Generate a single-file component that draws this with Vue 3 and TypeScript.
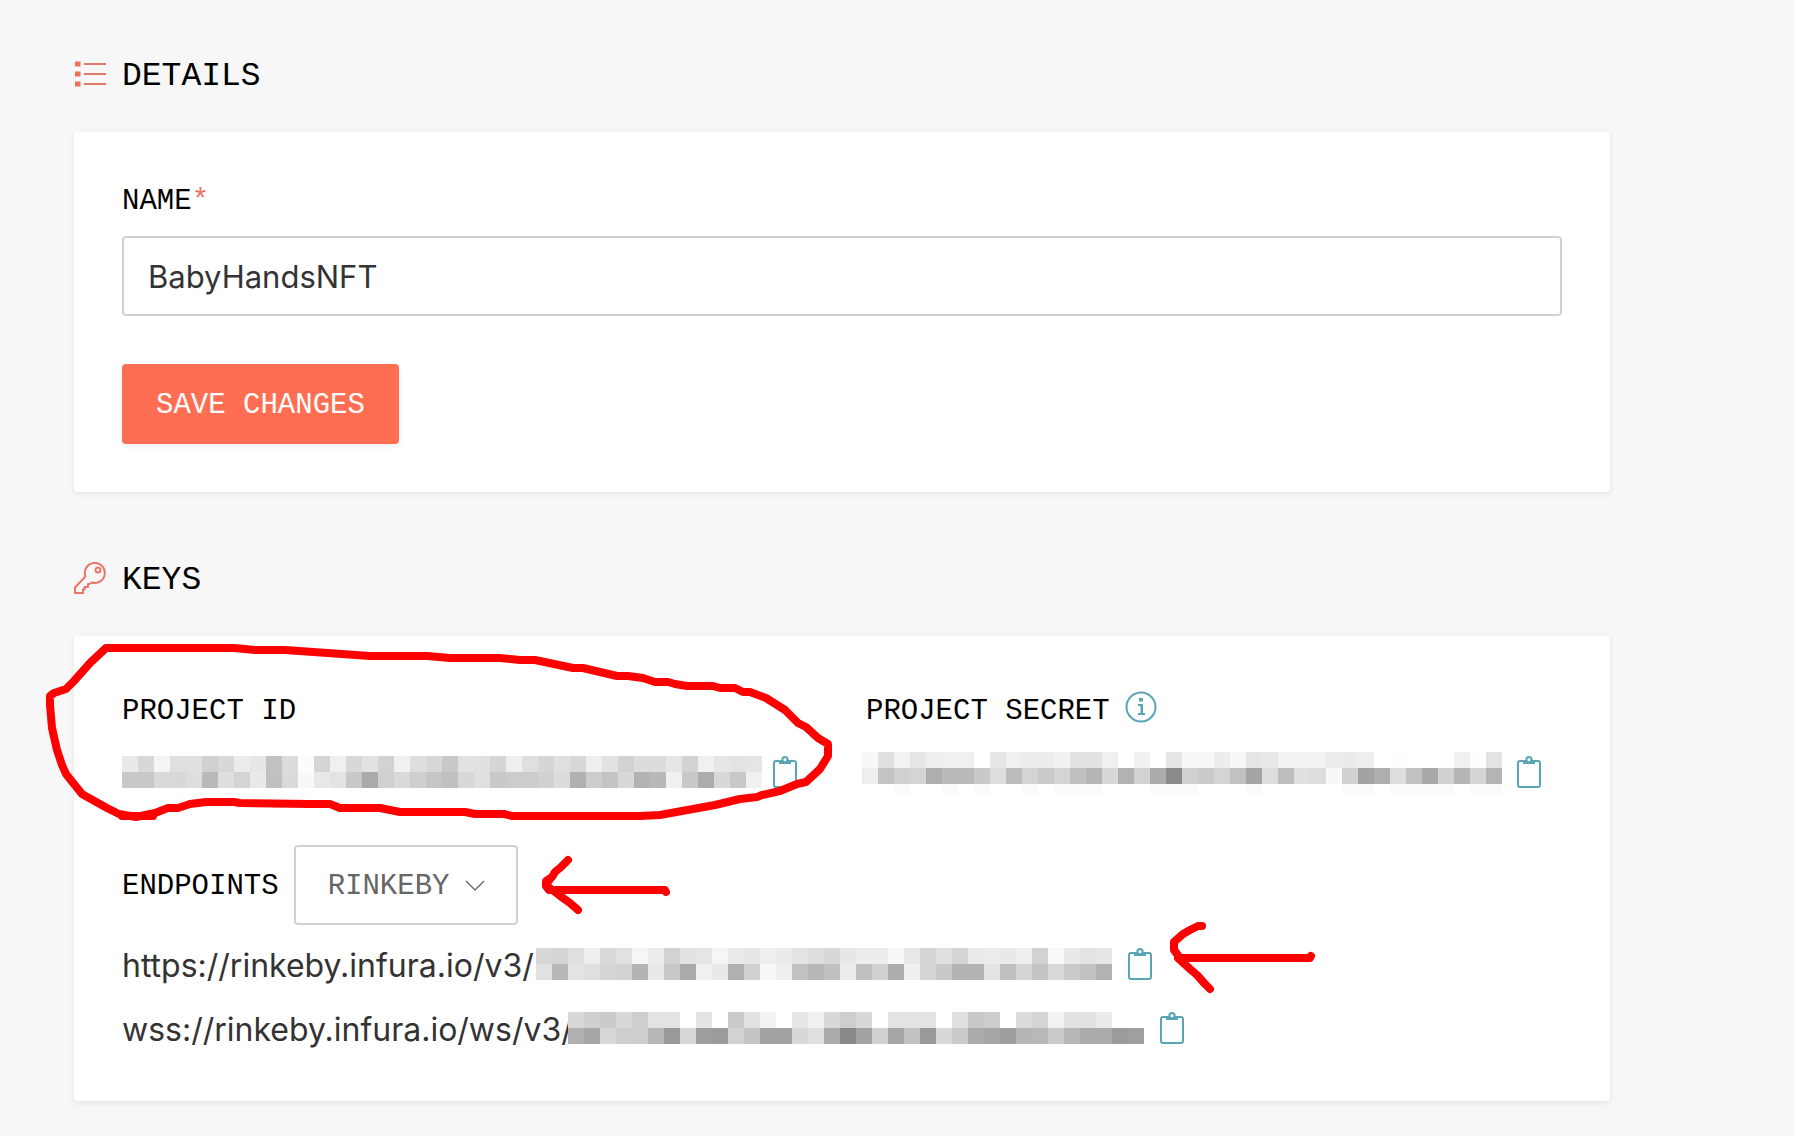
<script setup lang="ts">
import { ref, h } from 'vue'

const projectName = ref<string>('BabyHandsNFT')
const network = ref<string>('rinkeby')

// Redacted values: one two-digit hex grey per 16px cell, one string per row.
const projectId: string[] = [
  'e9d8f5e0e0d0d8ece6c2dcfcd5f0d8e2d2f1ded7c8e2e0d6eedfd6dfd8eee2d2dcdce6d3f0e6e3e5',
  'c8c8d9d8debaded4e9c0daf8e8e3c8aad0d9cfc6c0d8dfc9ccccd1dcb0ccc4d8b2b8f0c8acd8c8f0',
]
const projectSecret: string[] = [
  'f8e0f2e6eef0f0ffe6f0ededf1e2e2f0fff1ffe5f8f8edf8e6e9f3f3f3ecebeefffdfffffff0fee3',
  'eec3d1d4aebabac9debbd4cbd5c0b6d8b2d2ab8bd0cbd4c1a4ddbde0ddf8d1a3aeddc1a8d0b5d5b5',
  'fffffbfffffbfffbfffffbfffbfbfbfffffffbfbfbfffffffbfffffffffffbfbfffbfbfbfbfffbfb',
]
const httpsKey: string[] = [
  'd8d4dfeed9e1f6edd2e2e5f6eae6eeebe4ded8e7ededf8e8d5e0d5eaece9eed2f9e9e3e6',
  'e1b8e3dfd4d3b4e9c9aaf0e9b0d0f7eec1b8c0ecc0d1adefd5c8b4b4e4bfd5c4d9cbc2b2',
]
const wssKey: string[] = [
  'd8cfcbd8cee3e3ffe4ffcae2f2ffe6f0d8ced8ffe3e3e3ffe0c9cdffdcd5f2e2e2ebffff',
  'b0a6d8cfceb899d79e9bd2c5a2a2d8e0ab89a3d0a6c299d8cbaba69db6b9cbb8abab9b9f',
]

const Mosaic = (props: { rows: string[] }) => {
  const width = props.rows[0].length * 8
  const height = props.rows.length > 2 ? 44 : 32
  return h(
    'svg',
    {
      width,
      height,
      viewBox: `0 0 ${width} ${height}`,
      'shape-rendering': 'crispEdges',
      role: 'img',
      'aria-label': 'Hidden value',
    },
    props.rows.flatMap((row, y) =>
      (row.match(/../g) ?? []).map((g, x) =>
        h('rect', { x: x * 16, y: y * 16, width: 16, height: 16, fill: `#${g}${g}${g}` }),
      ),
    ),
  )
}
Mosaic.props = ['rows']

const CopyButton = () =>
  h('button', { type: 'button', 'aria-label': 'Copy to clipboard' }, [
    h('svg', { width: 24, height: 32, viewBox: '0 0 24 32', fill: 'none', stroke: '#5aa5b5', 'stroke-width': 2 }, [
      h('rect', { x: 1, y: 5, width: 22, height: 26, rx: 2 }),
      h('path', { d: 'M6 4h12v4H6z', fill: '#5aa5b5', stroke: 'none' }),
      h('circle', { cx: 12, cy: 3.6, r: 2.6, fill: '#fff' }),
    ]),
  ])
</script>

<template>
  <main class="page">
    <section class="section">
      <h2 class="heading">
        <svg width="32" height="32" viewBox="0 0 32 32" aria-hidden="true">
          <path d="M1 3.500h5.500v5h-5.500zM1 13.500h5.500v5h-5.500zM1 23.500h5.500v5h-5.500z" fill="#f0705a" />
          <path d="M10 6h22M10 16h22M10 26h22" stroke="#e27a6a" stroke-width="2" />
        </svg>
        <span class="heading-text">DETAILS</span>
      </h2>
      <form class="card" @submit.prevent>
        <label class="label name-label" for="project-name">NAME<span class="required">*</span></label>
        <input id="project-name" v-model="projectName" class="name-input" type="text" />
        <button class="save" type="submit">SAVE CHANGES</button>
      </form>
    </section>

    <section class="section">
      <h2 class="heading">
        <svg width="32" height="32" viewBox="0 0 32 32" fill="none" stroke="#ea7766" stroke-width="2" aria-hidden="true">
          <path d="M11.500 14.500A10 10 0 1 1 18 20.500L15.500 22H14V25H10.500V27.500H9V31H1V25.500Z" stroke-linejoin="round" />
          <circle cx="24" cy="8" r="2.500" />
        </svg>
        <span class="heading-text">KEYS</span>
      </h2>
      <div class="card keys">
        <div class="credentials">
          <div class="credential">
            <h3 class="label credential-label"><span class="label-text">PROJECT ID</span></h3>
            <div class="value id-value">
              <Mosaic :rows="projectId" />
              <CopyButton class="copy" />
            </div>
          </div>
          <div class="credential">
            <h3 class="label credential-label secret-label">
              <span class="label-text">PROJECT SECRET</span>
              <svg class="info" width="32" height="32" viewBox="0 0 32 32" role="img" aria-label="Information">
                <circle cx="16" cy="16" r="14.500" fill="none" stroke="#5aa5b5" stroke-width="2" />
                <path d="M14 7h4v3.500h-4zM13 13h5v9h2v2h-7v-2h2.500v-7H13z" fill="#5aa5b5" />
              </svg>
            </h3>
            <div class="value">
              <Mosaic class="tall" :rows="projectSecret" />
              <CopyButton class="copy" />
            </div>
          </div>
        </div>

        <div class="network">
          <label class="label network-label" for="network">ENDPOINTS</label>
          <div class="select-box">
            <select id="network" v-model="network" class="select">
              <option value="mainnet">MAINNET</option>
              <option value="ropsten">ROPSTEN</option>
              <option value="kovan">KOVAN</option>
              <option value="rinkeby">RINKEBY</option>
              <option value="goerli">GÖRLI</option>
            </select>
            <svg class="chevron" width="20" height="12" viewBox="0 0 20 12" fill="none" stroke="#666" aria-hidden="true">
              <path d="M1 1l9 9 9-9" stroke-width="1.300" />
            </svg>
          </div>
        </div>

        <div class="endpoint">
          <span class="url https">https://rinkeby.infura.io/v3/2</span>
          <Mosaic :rows="httpsKey" />
          <CopyButton class="copy" />
        </div>
        <div class="endpoint">
          <span class="url wss">wss://rinkeby.infura.io/ws/v3/2</span>
          <Mosaic :rows="wssKey" />
          <CopyButton class="copy" />
        </div>

        <!-- Hand-drawn marks laid over the card -->
        <svg class="marks" width="1300" height="400" viewBox="74 636 1300 400" aria-hidden="true">
          <path d="M106 648H234L255 650H285L370 656H427L450 658H500L520 660H535L573 668H583L617 676H628L643 678L655 682H668L675 684L687 686H713L720 688H735L743 692H750L766 698L785 710L798 723L806 727L818 738L828 744V756L820 769L806 782L797 784L780 791L762 795L757 797L740 799L715 805L660 815L640 816H512L504 814H475L465 812H400L380 808H340L330 804H310L240 803L234 802H206L190 804L178 808H168L155 813L136 817L119 814L107 808L98 803L82 794L66 774L62 765L57 750L52 728L50 705V696L54 693L66 689L74 681L90 663Z" />
          <path d="M153 816H122M568 860L561 867L555 872L552 877L546 881V886L549 890H665L666 892M554 891L563 898L570 903L578 910" />
          <path d="M550 879L546 885L551 889M1202 926H1198L1190 930L1183 934L1174 942V950L1180 958H1310L1311 956M1178 958L1190 969L1197 975L1205 984L1210 989" />
        </svg>
      </div>
    </section>
  </main>
</template>

<style>
body {
  margin: 0;
  background: #f7f7f7;
}
</style>

<style scoped>
.page {
  box-sizing: border-box;
  padding: 50px 184px 34px 74px;
  font-family: Inter, "Liberation Sans", sans-serif;
  font-size: 32px;
  color: #333;
}

.section + .section {
  margin-top: 62px;
}

.heading {
  display: flex;
  align-items: center;
  gap: 16px;
  height: 48px;
  margin: 0 0 34px;
  font: 400 33px/42px "Liberation Mono", monospace;
  color: #000;
}

.heading-text,
.label-text {
  padding-top: 6px;
}

.card {
  box-sizing: border-box;
  padding: 48px;
  border-radius: 4px;
  background: #fff;
  box-shadow: 0 2px 6px rgba(0, 0, 0, 0.08);
}

.label {
  margin: 0;
  font: 400 29px/38px "Liberation Mono", monospace;
  color: #000;
}

.name-label {
  display: block;
  padding-top: 3px;
  margin-bottom: 15px;
}

.required {
  color: #f0705a;
}

.name-input {
  display: block;
  box-sizing: border-box;
  width: 100%;
  height: 80px;
  padding: 0 24px;
  border: 2px solid #d2d2d2;
  border-radius: 4px;
  background: #fff;
  font: inherit;
  font-size: 31px;
  color: #333;
}

.save {
  display: block;
  height: 80px;
  margin-top: 48px;
  padding: 3px 34px 0;
  border: 0;
  border-radius: 4px;
  background: #ff6e52;
  box-shadow: 0 2px 6px rgba(0, 0, 0, 0.08);
  font: 400 29px/38px "Liberation Mono", monospace;
  color: #fff;
}

.keys {
  position: relative;
  padding-bottom: 41px;
}

.credentials {
  display: grid;
  grid-template-columns: 1fr 1fr;
  gap: 40px;
  margin-bottom: 49px;
}

.credential-label {
  display: flex;
  align-items: center;
  gap: 15px;
  height: 50px;
  margin-bottom: 14px;
}

.secret-label {
  padding-left: 4px;
}

.info {
  margin-bottom: 4px;
}

.value {
  display: flex;
  align-items: center;
  gap: 15px;
  height: 48px;
}

.id-value {
  gap: 11px;
}

.tall {
  align-self: flex-end;
}

.copy {
  display: flex;
  padding: 0;
  border: 0;
  background: none;
}

.network {
  display: flex;
  align-items: center;
  gap: 15px;
  margin-bottom: 7px;
}

.network-label {
  padding-top: 3px;
}

.select-box {
  position: relative;
}

.select {
  display: block;
  box-sizing: border-box;
  width: 224px;
  height: 80px;
  padding: 3px 32px 0;
  border: 2px solid #d2d2d2;
  border-radius: 4px;
  background: #fff;
  appearance: none;
  font: 400 29px/38px "Liberation Mono", monospace;
  color: #666;
}

.chevron {
  position: absolute;
  top: 35px;
  right: 33px;
  pointer-events: none;
}

.endpoint {
  display: flex;
  align-items: center;
  height: 64px;
}

.endpoint .copy {
  margin-left: 16px;
}

.url {
  flex: none;
  padding-top: 4px;
  line-height: 44px;
  white-space: nowrap;
}

.https {
  width: 414px;
}

.wss {
  width: 446px;
}

.marks {
  position: absolute;
  top: 0;
  left: 0;
  overflow: visible;
  fill: none;
  stroke: #f00;
  stroke-width: 8px;
  stroke-linecap: round;
  stroke-linejoin: round;
  pointer-events: none;
}
</style>
